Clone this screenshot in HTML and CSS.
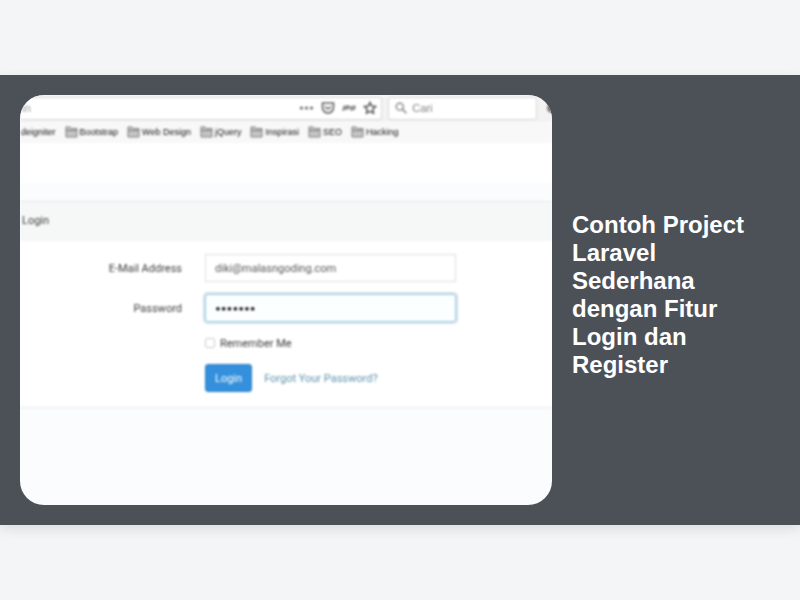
FILE: index.html
```html
<!DOCTYPE html>
<html lang="id">
<head>
<meta charset="utf-8">
<meta name="viewport" content="width=device-width, initial-scale=1">
<title>Contoh Project Laravel</title>
<link rel="stylesheet" href="styles.css">
</head>
<body>
<svg class="defs" aria-hidden="true">
  <symbol id="folder" viewBox="0 0 13 12">
    <path d="M1 11V1H5L6.500 2.500H12V11Z" fill="#c4c4c4" stroke="#808080"/>
    <path d="M1 4.500H12" stroke="#777"/>
  </symbol>
</svg>
<main class="banner">
  <div class="preview">
    <div class="screen">
      <div class="toolbar">
        <div class="address">
          <span class="url">in</span>
          <svg width="15" height="14" viewBox="0 0 15 14" fill="#666"><circle cx="2.500" cy="7" r="1.600"/><circle cx="7.500" cy="7" r="1.600"/><circle cx="12.500" cy="7" r="1.600"/></svg>
          <svg width="14" height="14" viewBox="0 0 14 14" fill="none" stroke="#606060" stroke-width="1.600"><path d="M1.500 2H12.500V6.500A5.500 5.500 0 0 1 1.500 6.500Z"/><path d="M4 5.500L7 8L10 5.500"/></svg>
          <svg width="14" height="14" viewBox="0 0 14 14" fill="none" stroke="#777" stroke-width="1.300"><path d="M1 10L2 5.500H4.500L4 8H2M6 4L5.500 8.500M6 6H8.500L8 8.500M9.500 10L10.500 5.500H13L12.500 8H10"/></svg>
          <svg width="14" height="14" viewBox="0 0 14 14" fill="none" stroke="#555" stroke-width="1.500"><path d="M7 1.500L8.700 5L12.600 5.500L9.800 8.200L10.500 12.200L7 10.300L3.500 12.200L4.200 8.200L1.400 5.500L5.300 5Z"/></svg>
        </div>
        <div class="search">
          <svg width="14" height="14" viewBox="0 0 14 14" fill="none" stroke="#777" stroke-width="1.500"><circle cx="5.500" cy="5.500" r="4"/><path d="M8.500 8.500L13 13"/></svg>
          <input type="text" placeholder="Cari" aria-label="Cari">
        </div>
        <svg class="library" width="12" height="14" viewBox="0 0 12 14"><circle cx="6" cy="7" r="5" fill="#777"/></svg>
      </div>
      <nav class="bookmarks">
        <a href="#">deigniter</a>
        <a href="#"><svg><use href="#folder"/></svg>Bootstrap</a>
        <a href="#"><svg><use href="#folder"/></svg>Web Design</a>
        <a href="#"><svg><use href="#folder"/></svg>jQuery</a>
        <a href="#"><svg><use href="#folder"/></svg>Inspirasi</a>
        <a href="#"><svg><use href="#folder"/></svg>SEO</a>
        <a href="#"><svg><use href="#folder"/></svg>Hacking</a>
      </nav>
      <div class="site-header"></div>
      <section class="card">
        <h2>Login</h2>
        <form>
          <label class="name" for="email">E-Mail Address</label>
          <input class="field" id="email" type="text" value="diki@malasngoding.com">
          <label class="name" for="password">Password</label>
          <input class="field active" id="password" type="password" value="malasng">
          <div class="remember"><input id="remember" type="checkbox"><label for="remember">Remember Me</label></div>
          <div class="actions"><button type="button">Login</button><a href="#">Forgot Your Password?</a></div>
        </form>
      </section>
    </div>
  </div>
  <h1>Contoh Project Laravel Sederhana dengan Fitur Login dan Register</h1>
</main>
</body>
</html>
```
FILE: styles.css
```css
* { box-sizing: border-box; }

body {
  margin: 0;
  min-height: 100vh;
  display: flex;
  align-items: center;
  background: #f4f5f7;
  font-family: "Liberation Sans", Arial, sans-serif;
}

.defs { position: absolute; width: 0; height: 0; }

.banner {
  width: 100%;
  padding: 20px;
  display: grid;
  grid-template-columns: 70% 1fr;
  column-gap: 20px;
  align-items: center;
  background: #4c5158;
  box-shadow: 0 4px 12px rgba(0, 0, 0, 0.1);
}

h1 {
  margin: 0 0 10px;
  color: #fff;
  font-size: 24px;
  line-height: 28px;
}

.preview {
  border-radius: 24px;
  overflow: hidden;
  background: #fafcfe;
}

.screen {
  padding-bottom: 97px;
  filter: blur(1px);
  font-family: Roboto, "Open Sans", sans-serif;
  font-size: 11px;
  color: #3c3c3c;
}

.toolbar {
  height: 26px;
  padding: 1px 0 0;
  display: flex;
  align-items: center;
  gap: 6px;
  background: #f3f3f4;
  border-bottom: 1px solid #ececec;
}

.address, .search {
  height: 23px;
  display: flex;
  align-items: center;
  background: #fff;
  border: 1px solid #d8d8d8;
  border-radius: 3px;
}

.address {
  flex: 1;
  gap: 7px;
  padding: 0 4px 0 2px;
  border-left: 0;
}

.url { flex: 1; color: #999; }

.search {
  width: 28%;
  gap: 5px;
  padding: 0 6px;
}

.search input {
  width: 100%;
  padding: 0;
  border: 0;
  background: none;
  font: 11px "Liberation Sans", sans-serif;
}

.search input::placeholder { color: #808080; opacity: 1; }

.library { margin: 0 -6px 0 3px; }

.bookmarks {
  height: 22px;
  padding-left: 1px;
  display: flex;
  align-items: center;
  gap: 9px;
  background: #f8f8f8;
  font-family: "Liberation Sans", sans-serif;
  font-size: 9px;
  white-space: nowrap;
}

.bookmarks a {
  display: flex;
  align-items: center;
  gap: 2px;
  color: #111;
  text-decoration: none;
}

.bookmarks svg { width: 13px; height: 12px; }

.site-header {
  height: 40px;
  margin-bottom: 18px;
  background: #fff;
}

.card {
  background: #fff;
  border: solid #e8eaec;
  border-width: 1px 0;
}

.card h2 {
  margin: 0;
  padding: 0 2px;
  background: #f6f7f7;
  border-bottom: 1px solid #f2f4f4;
  font-size: 11px;
  font-weight: 400;
  line-height: 38px;
}

form {
  padding: 13px 0 15px;
  display: grid;
  grid-template-columns: 162fr 251fr 73fr;
  column-gap: 23px;
  row-gap: 12px;
  align-items: center;
}

.name { grid-column: 1; text-align: right; }

.field {
  grid-column: 2;
  width: 100%;
  height: 28px;
  padding: 0 9px;
  border: 1px solid #dedede;
  background: #fff;
  color: #555;
  font: inherit;
}

.active {
  border-color: #a5cbe2;
  border-radius: 3px;
  box-shadow: 0 0 0 2px #cfe2ec;
  background: #fcffff;
  color: #111;
  font: 10px Lato, sans-serif;
}

.remember, .actions {
  grid-column: 2 / 4;
  display: flex;
  align-items: center;
}

.remember { gap: 5px; height: 18px; }

.remember input {
  appearance: none;
  width: 10px;
  height: 10px;
  margin: 0;
  border: 1px solid #ccc;
  border-radius: 2px;
}

.actions { gap: 12px; }

.actions button {
  height: 28px;
  padding: 0 9px;
  border: 1px solid #2e7fc4;
  border-radius: 3px;
  background: #3490dc;
  color: #fff;
  font: inherit;
}

.actions a { color: #5f93ab; text-decoration: none; }
```
